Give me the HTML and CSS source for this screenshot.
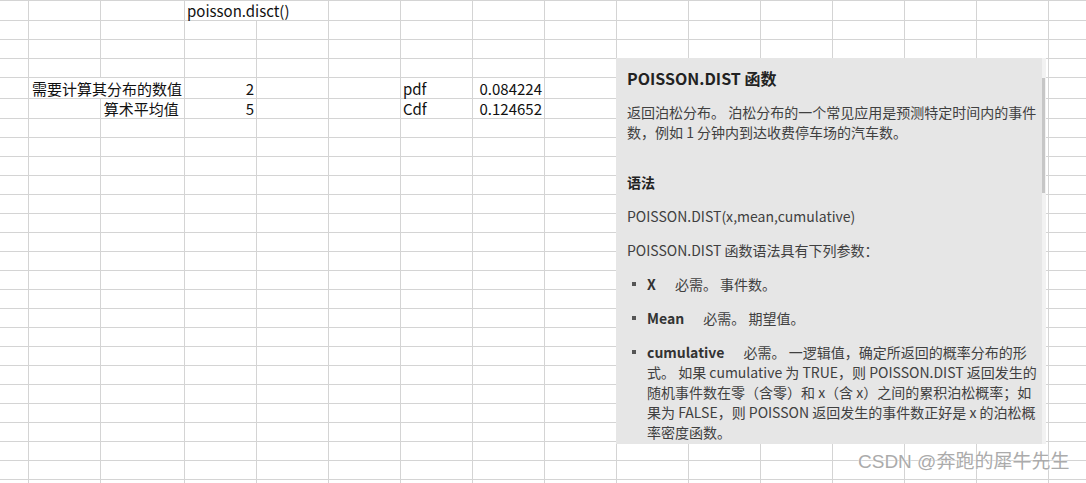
FILE: index.html
```html
<!DOCTYPE html>
<html lang="zh-CN">
<head>
  <meta charset="UTF-8">
  <meta name="viewport" content="width=device-width, initial-scale=1.0">
  <title>POISSON.DIST</title>
  <link rel="stylesheet" href="styles.css">
</head>
<body>
  <!-- Worksheet -->
  <div class="sheet" id="sheet"></div>

  <!-- Function help panel -->
  <aside class="help-panel">
    <div class="help-content">
      <h2>POISSON.DIST 函数</h2>
      <p>返回泊松分布。 泊松分布的一个常见应用是预测特定时间内的事件数，例如 1 分钟内到达收费停车场的汽车数。</p>
      <h3>语法</h3>
      <p>POISSON.DIST(x,mean,cumulative)</p>
      <p>POISSON.DIST 函数语法具有下列参数：</p>
      <ul class="args">
        <li><b>X</b> 必需。 事件数。</li>
        <li><b>Mean</b> 必需。 期望值。</li>
        <li><b>cumulative</b> 必需。 一逻辑值，确定所返回的概率分布的形<br>式。 如果 cumulative 为 TRUE，则 POISSON.DIST 返回发生的<br>随机事件数在零（含零）和 x（含 x）之间的累积泊松概率；如<br>果为 FALSE，则 POISSON 返回发生的事件数正好是 x 的泊松概<br>率密度函数。</li>
      </ul>
    </div>
    <div class="scroll-track"><div class="scroll-thumb"></div></div>
  </aside>

  <div class="watermark">CSDN @奔跑的犀牛先生</div>

  <script>
    // Sheet contents: row index -> cells
    const COLS = 16;
    const ROWS = 26;
    const sheetData = {
      0: [{ col: 3, span: 2, text: 'poisson.disct()' }],
      4: [
        { col: 1, span: 2, text: '需要计算其分布的数值', align: 'right' },
        { col: 3, text: '2', align: 'right' },
        { col: 6, text: 'pdf' },
        { col: 7, text: '0.084224', align: 'right' }
      ],
      5: [
        { col: 2, text: '算术平均值 ', align: 'right' },
        { col: 3, text: '5', align: 'right' },
        { col: 6, text: 'Cdf' },
        { col: 7, text: '0.124652', align: 'right' }
      ]
    };

    function renderSheet() {
      const sheet = document.getElementById('sheet');

      for (let r = 0; r < ROWS; r++) {
        const rowCells = sheetData[r] || [];

        for (let c = 0; c < COLS; c++) {
          const data = rowCells.find(cell => cell.col === c);
          const cell = document.createElement('div');
          cell.className = 'cell';

          if (data) {
            cell.textContent = data.text;
            if (data.align === 'right') cell.classList.add('right');
            if (data.span) {
              cell.classList.add('span-' + data.span);
              c += data.span - 1;
            }
          }
          sheet.appendChild(cell);
        }
      }
    }

    renderSheet();
  </script>
</body>
</html>
```

FILE: styles.css
```css
/* General Styles */
:root {
  --grid-line: #d4d4d4;
  --panel-bg: #e6e6e6;
  --text-dark: #222222;
  --text-body: #404040;
}

body {
  margin: 0;
  height: 483px;
  overflow: hidden;
  background: #ffffff;
  font-family: "Noto Sans CJK SC", sans-serif;
}

/* Worksheet */
.sheet {
  display: grid;
  grid-template-columns: 28px 71px 83px repeat(12, 71px) 1fr;
  grid-template-rows: 19px 18px 18px 18px 20px 19px;
  grid-auto-rows: 18px;
  gap: 1px;
  padding-top: 1px;
  background: var(--grid-line);
}

.cell {
  display: flex;
  align-items: flex-end;
  padding: 0 2px;
  background: #ffffff;
  color: #111111;
  font-size: 15px;
  line-height: 18px;
  white-space: pre;
}

.cell.right {
  justify-content: flex-end;
}

.cell.span-2 {
  grid-column: span 2;
}

/* Help Panel */
.help-panel {
  position: absolute;
  left: 616px;
  top: 58px;
  width: 430px;
  height: 386px;
  display: flex;
  overflow: hidden;
}

.help-content {
  flex: 1;
  background: var(--panel-bg);
  padding: 8px 1px 0 11px;
  font-size: 14px;
  line-height: 20px;
  color: var(--text-body);
}

.help-content h2 {
  margin: 0 0 12px;
  font-size: 16px;
  line-height: 24px;
  font-weight: 700;
  color: var(--text-dark);
}

.help-content h3 {
  margin: 30px 0 14px;
  font-size: 14px;
  line-height: 20px;
  font-weight: 700;
  color: var(--text-dark);
}

.help-content p {
  margin: 0 0 14px;
}

.args {
  list-style: none;
  margin: 0;
  padding: 0;
}

.args li {
  position: relative;
  padding-left: 20px;
  margin-bottom: 14px;
}

.args li::before {
  content: '';
  position: absolute;
  left: 5px;
  top: 8px;
  width: 4px;
  height: 4px;
  background: #555555;
}

.args b {
  margin-right: 16px;
  color: #333333;
}

.scroll-track {
  width: 4px;
  background: #f2f2f2;
}

.scroll-thumb {
  width: 3px;
  height: 115px;
  margin-top: 20px;
  background: #c6c6c6;
}

/* Watermark */
.watermark {
  position: absolute;
  left: 858px;
  top: 452px;
  font-family: "Liberation Sans", "Noto Sans CJK SC", sans-serif;
  font-size: 19px;
  line-height: 19px;
  color: #ababab;
  text-shadow: 0 0 2px #ffffff, 0 0 1px #ffffff;
  white-space: nowrap;
}
```
